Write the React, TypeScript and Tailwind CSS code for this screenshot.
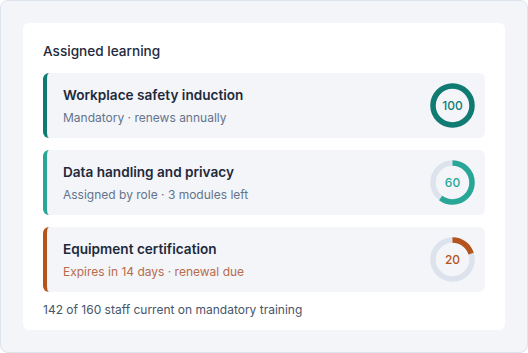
const items = [
  {
    title: "Workplace safety induction",
    meta: "Mandatory · renews annually",
    pct: 100,
    color: "#0f7b72",
    bar: "border-[#0f7b72]",
    metaClass: "text-[#64748b]",
  },
  {
    title: "Data handling and privacy",
    meta: "Assigned by role · 3 modules left",
    pct: 60,
    color: "#28a697",
    bar: "border-[#28a697]",
    metaClass: "text-[#64748b]",
  },
  {
    title: "Equipment certification",
    meta: "Expires in 14 days · renewal due",
    pct: 20,
    color: "#b4531c",
    bar: "border-[#b4531c]",
    metaClass: "text-[#b86b4b]",
  },
];

function Ring({ pct, color }: { pct: number; color: string }) {
  const r = 19.5;
  const c = 2 * Math.PI * r;
  return (
    <div className="relative w-[45px] h-[45px] shrink-0">
      <svg width="45" height="45" viewBox="0 0 45 45" className="-rotate-90">
        <circle cx="22.5" cy="22.5" r={r} fill="none" stroke="#dde3ec" strokeWidth="5.5" />
        <circle
          cx="22.5"
          cy="22.5"
          r={r}
          fill="none"
          stroke={color}
          strokeWidth="5.5"
          strokeDasharray={`${(c * pct) / 100} ${c}`}
        />
      </svg>
      <span
        className="absolute inset-0 grid place-items-center text-[12px] font-medium"
        style={{ color }}
      >
        {pct}
      </span>
    </div>
  );
}

export default function App() {
  return (
    <div className="w-[528px] h-[353px] bg-[#f3f5f9] border border-[#dde3ec] rounded-lg p-[22px] font-['Inter',sans-serif]">
      <div className="h-full bg-white rounded-md px-5 pt-[18px] flex flex-col">
        <h2 className="text-[13.6px] leading-5 font-medium text-[#1e293b] mb-3">Assigned learning</h2>
        <div className="flex flex-col gap-3">
          {items.map((it) => (
            <div
              key={it.title}
              className={`h-[65px] flex items-center bg-[#f3f5f9] rounded-md border-l-4 ${it.bar} pl-4 pr-[10px]`}
            >
              <div className="flex-1 flex flex-col gap-1">
                <div className="text-[13.6px] leading-5 font-semibold text-[#1e293b]">{it.title}</div>
                <div className={`text-[12px] leading-[18px] ${it.metaClass}`}>{it.meta}</div>
              </div>
              <Ring pct={it.pct} color={it.color} />
            </div>
          ))}
        </div>
        <p className="mt-[9px] text-[12px] leading-[18px] text-[#475569]">
          142 of 160 staff current on mandatory training
        </p>
      </div>
    </div>
  );
}
